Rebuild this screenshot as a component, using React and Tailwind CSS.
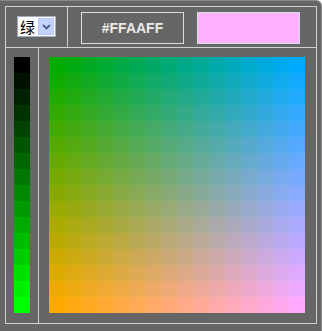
import React from "react";

const hex = (n) => n.toString(16).padStart(2, "0");

export default function App() {
  const steps = [...Array(16)].map((_, i) => i * 17);

  return (
    <div className="w-[322px] h-[331px] bg-[#666666] pl-[5px] pt-[5px] border-r border-t border-[#8a8a8a] rounded-tr-[6px] font-['Liberation_Sans',Arial,sans-serif]">
      <div className="w-[312px] h-[318px] border border-[#d0d0d0] flex flex-col">
        {/* top row */}
        <div className="h-[41px] border-b border-[#d0d0d0] flex">
          <div className="w-[62px] border-r border-[#d0d0d0] pl-[11px] pt-[9px]">
            <div className="w-[39px] h-[21px] bg-white border border-[#a5acc4] flex items-stretch">
              <span className="flex-1 pl-[2px] text-[15px] leading-[19px] text-black font-['Noto_Sans_CJK_SC',sans-serif]">
                绿
              </span>
              <span className="w-[16px] m-[1px] bg-[#c3d3fd] border border-[#b7c8f6] flex items-center justify-center">
                <svg width="9" height="6" viewBox="0 0 9 6">
                  <path d="M1 1 L4.5 4.5 L8 1" fill="none" stroke="#4d6185" strokeWidth="1.8" />
                </svg>
              </span>
            </div>
          </div>
          <div className="flex-1 flex items-start pt-[5px] pl-[13px] gap-[13px]">
            <div className="w-[103px] h-[32px] border border-[#dcdcdc] flex items-center justify-center text-[14px] font-bold text-[#ececec]">
              #FFAAFF
            </div>
            <div className="w-[103px] h-[32px] border border-[#dcdcdc] bg-[#ffb0ff]" />
          </div>
        </div>
        {/* bottom row */}
        <div className="flex-1 flex">
          <div className="w-[33px] border-r border-[#d0d0d0] pl-[8px] pt-[9px]">
            <div className="w-[16px] flex flex-col">
              {steps.map((g) => (
                <div key={g} className="h-[16px]" style={{ background: `#00${hex(g)}00` }} />
              ))}
            </div>
          </div>
          <div className="flex-1 pl-[10px] pt-[9px]">
            <div className="w-[256px] h-[256px] grid grid-cols-[repeat(16,16px)]">
              {steps.map((r) =>
                steps.map((b) => (
                  <div
                    key={`${r}-${b}`}
                    className="h-[16px]"
                    style={{ background: `#${hex(r)}aa${hex(b)}` }}
                  />
                ))
              )}
            </div>
          </div>
        </div>
      </div>
    </div>
  );
}
